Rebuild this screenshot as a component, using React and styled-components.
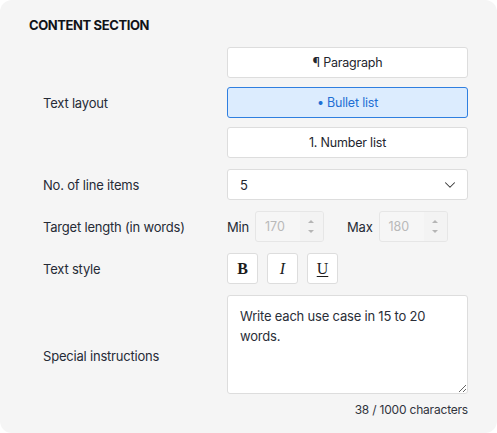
import React from "react";
import styled, { createGlobalStyle } from "styled-components";
import { ChevronDown } from "lucide-react";

const Global = createGlobalStyle`
  html, body { margin: 0; padding: 0; background: #ffffff; }
  body { font-family: Inter, "Noto Sans", sans-serif; }
  * { box-sizing: border-box; }
`;

const Panel = styled.section`
  width: 497px;
  background: #f5f5f5;
  border-radius: 12px;
  padding: 17px 28px 16px 29px;
`;

const Title = styled.h2`
  margin: 0 0 14px 0;
  font-size: 13px;
  line-height: 16px;
  font-weight: 700;
  letter-spacing: -0.4px;
  color: #111318;
`;

const Form = styled.div`
  display: grid;
  grid-template-columns: 184px 241px;
  row-gap: 11px;
  padding-left: 14px;
`;

const Label = styled.div`
  align-self: center;
  font-size: 13px;
  letter-spacing: -0.2px;
  color: #262b36;
`;

const Stack = styled.div`
  display: flex;
  flex-direction: column;
  gap: 9px;
`;

const LayoutButton = styled.button`
  height: 31px;
  width: 100%;
  border-radius: 3px;
  border: 1px solid ${(p) => (p.$active ? "#2f7fe0" : "#dddddd")};
  background: ${(p) => (p.$active ? "#dcecfe" : "#ffffff")};
  color: ${(p) => (p.$active ? "#1f6fd4" : "#23262e")};
  font-family: Inter, sans-serif;
  font-size: 12.5px;
  letter-spacing: -0.2px;
  cursor: pointer;
`;

const Select = styled.div`
  height: 31px;
  display: flex;
  align-items: center;
  justify-content: space-between;
  padding: 0 8px 0 12px;
  background: #ffffff;
  border: 1px solid #dddddd;
  border-radius: 3px;
  font-size: 13px;
  color: #23262e;
`;

const RangeRow = styled.div`
  display: flex;
  align-items: center;
  height: 31px;
`;

const RangeLabel = styled.span`
  font-size: 13px;
  letter-spacing: -0.2px;
  color: #262b36;
  margin-right: ${(p) => p.$gap}px;
  margin-left: ${(p) => p.$lead || 0}px;
`;

const NumberBox = styled.div`
  width: 69px;
  height: 31px;
  display: flex;
  background: #f6f6f6;
  border: 1px solid #e6e6e6;
  border-radius: 3px;
  overflow: hidden;
`;

const NumberValue = styled.div`
  flex: 1;
  display: flex;
  align-items: center;
  padding-left: 9px;
  font-size: 12.5px;
  color: #b9b9b9;
`;

const Spinner = styled.div`
  width: 23px;
  display: flex;
  flex-direction: column;
  align-items: center;
  justify-content: center;
  gap: 7px;
  background: #f3f3f3;
`;

const Tri = styled.span`
  width: 0;
  height: 0;
  border-left: 3px solid transparent;
  border-right: 3px solid transparent;
  ${(p) =>
    p.$up
      ? "border-bottom: 3px solid #b5b5b5;"
      : "border-top: 3px solid #b5b5b5;"}
`;

const StyleRow = styled.div`
  display: flex;
  gap: 9px;
`;

const StyleButton = styled.button`
  width: 31px;
  height: 31px;
  padding: 0;
  background: #ffffff;
  border: 1px solid #dddddd;
  border-radius: 3px;
  font-family: "Liberation Serif", "DejaVu Serif", serif;
  font-size: 16px;
  color: #1b1b1b;
  font-weight: ${(p) => (p.$bold ? 700 : 400)};
  font-style: ${(p) => (p.$italic ? "italic" : "normal")};
  text-decoration: ${(p) => (p.$underline ? "underline" : "none")};
  text-underline-offset: 2px;
  cursor: pointer;
`;

const InstructionGroup = styled.div`
  display: flex;
  flex-direction: column;
`;

const TextArea = styled.textarea`
  width: 241px;
  height: 99px;
  padding: 10px 12px;
  background: #ffffff;
  border: 1px solid #dddddd;
  border-radius: 3px;
  font-family: Inter, sans-serif;
  font-size: 13px;
  line-height: 20px;
  letter-spacing: -0.2px;
  color: #2a2e38;
  resize: vertical;
  outline: none;
`;

const Counter = styled.div`
  margin-top: 8px;
  text-align: right;
  font-size: 12px;
  letter-spacing: -0.2px;
  color: #30343d;
`;

export default function App() {
  return (
    <>
      <Global />
      <Panel>
        <Title>CONTENT SECTION</Title>
        <Form>
          <Label>Text layout</Label>
          <Stack>
            <LayoutButton>¶ Paragraph</LayoutButton>
            <LayoutButton $active>• Bullet list</LayoutButton>
            <LayoutButton>1. Number list</LayoutButton>
          </Stack>

          <Label>No. of line items</Label>
          <Select>
            <span>5</span>
            <ChevronDown size={18} strokeWidth={1.4} color="#333" />
          </Select>

          <Label>Target length (in words)</Label>
          <RangeRow>
            <RangeLabel $gap={6}>Min</RangeLabel>
            <NumberBox>
              <NumberValue>170</NumberValue>
              <Spinner>
                <Tri $up />
                <Tri />
              </Spinner>
            </NumberBox>
            <RangeLabel $lead={23} $gap={6}>Max</RangeLabel>
            <NumberBox>
              <NumberValue>180</NumberValue>
              <Spinner>
                <Tri $up />
                <Tri />
              </Spinner>
            </NumberBox>
          </RangeRow>

          <Label>Text style</Label>
          <StyleRow>
            <StyleButton $bold>B</StyleButton>
            <StyleButton $italic>I</StyleButton>
            <StyleButton $underline>U</StyleButton>
          </StyleRow>

          <Label>Special instructions</Label>
          <InstructionGroup>
            <TextArea defaultValue="Write each use case in 15 to 20 words." />
            <Counter>38 / 1000 characters</Counter>
          </InstructionGroup>
        </Form>
      </Panel>
    </>
  );
}
